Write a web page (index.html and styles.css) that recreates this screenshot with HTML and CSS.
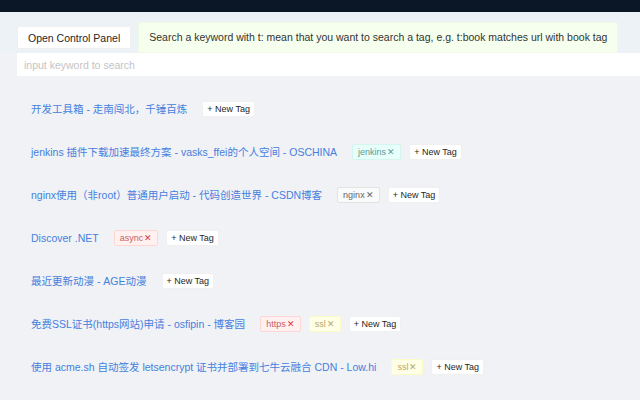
FILE: index.html
```html
<!DOCTYPE html>
<html lang="zh">
<head>
    <meta charset="UTF-8">
    <meta name="viewport" content="width=device-width, initial-scale=1.0">
    <title>Bookmark Tags</title>
    <link rel="stylesheet" href="styles.css">
</head>
<body>
    <div class="topbar"></div>

    <div class="toolbar">
        <button class="panel-btn">Open Control Panel</button>
        <div class="hint">Search a keyword with t: mean that you want to search a tag, e.g. t:book matches url with book tag</div>
    </div>
    <div class="search-row">
        <input type="text" class="search" placeholder="input keyword to search">
    </div>

    <ul class="bookmarks">
        <li class="row">
            <a href="#">开发工具箱 - 走南闯北，千锤百炼</a>
            <span class="tag add">+ New Tag</span>
        </li>
        <li class="row">
            <a href="#">jenkins 插件下载加速最终方案 - vasks_ffei的个人空间 - OSCHINA</a>
            <span class="tag cyan">jenkins<i class="close">✕</i></span>
            <span class="tag add">+ New Tag</span>
        </li>
        <li class="row">
            <a href="#">nginx使用（非root）普通用户启动 - 代码创造世界 - CSDN博客</a>
            <span class="tag plain">nginx<i class="close">✕</i></span>
            <span class="tag add">+ New Tag</span>
        </li>
        <li class="row">
            <a href="#">Discover .NET</a>
            <span class="tag red">async<i class="close">✕</i></span>
            <span class="tag add">+ New Tag</span>
        </li>
        <li class="row">
            <a href="#">最近更新动漫 - AGE动漫</a>
            <span class="tag add">+ New Tag</span>
        </li>
        <li class="row">
            <a href="#">免费SSL证书(https网站)申请 - osfipin - 博客园</a>
            <span class="tag red">https<i class="close">✕</i></span>
            <span class="tag yellow">ssl<i class="close">✕</i></span>
            <span class="tag add">+ New Tag</span>
        </li>
        <li class="row">
            <a href="#">使用 acme.sh 自动签发 letsencrypt 证书并部署到七牛云融合 CDN - Low.hi</a>
            <span class="tag yellow">ssl<i class="close">✕</i></span>
            <span class="tag add">+ New Tag</span>
        </li>
    </ul>
</body>
</html>
```

FILE: styles.css
```css
body {
    margin: 0;
    background-color: #f0f2f5;
    font-family: "Liberation Sans", Arial, "Noto Sans CJK SC", sans-serif;
    font-size: 10.5px;
    color: #333;
    height: 400px;
    overflow: hidden;
}

.topbar {
    height: 12px;
    background-color: #0b1727;
}

.toolbar {
    display: flex;
    align-items: center;
    gap: 7px;
    padding: 10px 0 0 17px;
    background-color: #edf2f6;
}

.panel-btn {
    height: 23px;
    padding: 0 10px;
    background-color: #fff;
    border: 1px solid #f0f0f0;
    border-radius: 2px;
    font-family: inherit;
    font-size: 10.5px;
    color: #262626;
}

.hint {
    padding: 8px 10px 9px;
    background-color: #f6ffed;
    border: 1px solid #f0f9e6;
    border-radius: 2px;
    color: #333;
}

.search-row {
    padding-left: 17px;
}

.search {
    display: block;
    width: 100%;
    height: 23px;
    box-sizing: border-box;
    padding: 0 7px;
    border: none;
    background-color: #fff;
    font-family: inherit;
    font-size: 10.5px;
}

.search::placeholder {
    color: #c4c4c4;
}

.bookmarks {
    list-style: none;
    margin: 0;
    padding: 11px 0 0 31px;
}

.row {
    display: flex;
    align-items: center;
    height: 43px;
}

.row a {
    color: #4580de;
    text-decoration: none;
    margin-right: 15px;
    white-space: nowrap;
}

.tag {
    display: inline-flex;
    align-items: center;
    height: 16px;
    box-sizing: border-box;
    padding: 0 5px;
    margin-right: 8px;
    border: 1px solid #f0f0f0;
    border-radius: 2px;
    font-size: 9px;
    white-space: nowrap;
}

.close {
    font-style: normal;
    font-size: 9px;
    margin-left: 1px;
}

.add {
    padding: 0 4px;
    background-color: #fff;
    color: #262626;
}

.plain {
    background-color: #fafafa;
    border-color: #e3e3e3;
    color: #666;
}

.cyan {
    background-color: #e6fffb;
    border-color: #d5f5ef;
    color: #5c9a98;
}

.red {
    background-color: #fff1f0;
    border-color: #ffd6d3;
    color: #c9605e;
}

.red .close {
    color: #d9363e;
}

.yellow {
    background-color: #feffe6;
    border-color: #fbfbc8;
    color: #b9a96a;
}
```
